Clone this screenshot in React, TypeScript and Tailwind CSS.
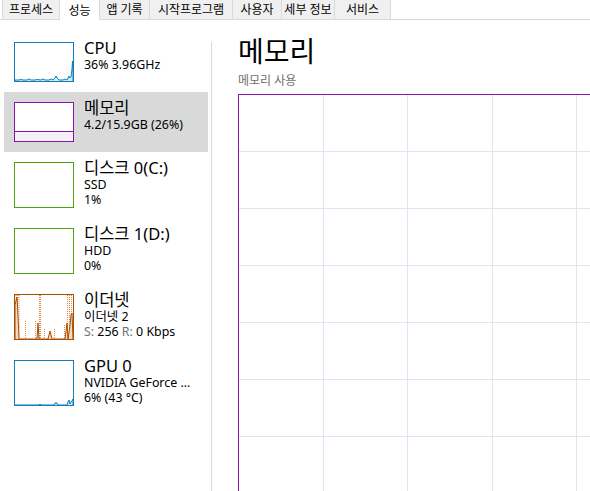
import React from "react";

const FONT = { fontFamily: '"Noto Sans", "Noto Sans CJK KR", sans-serif' };

const tabs: [string, number][] = [
  ["프로세스", 58],
  ["성능", 40],
  ["앱 기록", 50],
  ["시작프로그램", 83],
  ["사용자", 49],
  ["세부 정보", 53],
  ["서비스", 56],
];

function CpuGraph() {
  const pts =
    "0,38 0,37 4,37 6,36.5 8,37 12,37 14,36 16,37 20,37 22,36.5 26,37 28,36 30,37 34,37 36,36 38,37 40,35 41,33 42,35 44,37 48,37 50,36 52,37 53,35 54,33 55,35 56,34 57,26 57.5,18 58,30 58,38";
  return (
    <svg width="58" height="38" viewBox="0 0 58 38" className="block">
      <polygon points={pts} fill="#d6e9f5" stroke="none" />
      <polyline points={pts} fill="none" stroke="#117dbb" strokeWidth="1" />
    </svg>
  );
}

function GpuGraph() {
  const pts =
    "0,44 24,44 25,43 26,44 39,44 40,42 42,42 43,44 50,44 52,44 53,41 54,39 55,43 56,41 57,40 58,38 58,44";
  return (
    <svg width="58" height="44" viewBox="0 0 58 44" className="block">
      <polygon points={pts} fill="#d6e9f5" stroke="none" />
      <polyline points={pts} fill="none" stroke="#117dbb" strokeWidth="1" />
    </svg>
  );
}

function EthGraph() {
  const dotted: [number, number][] = [
    [1, 0],
    [2.5, 0],
    [4, 0],
    [10.5, 26],
    [20.5, 26],
    [24.5, 0],
    [25.5, 0],
    [29.5, 34],
    [39.5, 34],
    [49.5, 30],
    [52.5, 0],
    [54.5, 0],
    [56.5, 0],
  ];
  return (
    <svg width="58" height="44" viewBox="0 0 58 44" className="block">
      {dotted.map(([x, y], i) => (
        <line
          key={i}
          x1={x}
          y1={y}
          x2={x}
          y2={44}
          stroke="#e88a4c"
          strokeWidth="1"
          strokeDasharray="1 1"
        />
      ))}
      <polyline
        points="0,44 0,10 2,2 3,20 4,44 22,44 23,28 24,44 33,44 34,40 35,36 36,40 37,44 50,44 51,36 52,28 53,44 55,30 56,20 57,18 58,44"
        fill="#f6d7bf"
        stroke="#a74f01"
        strokeWidth="1"
      />
    </svg>
  );
}

function Item({
  color,
  tall,
  selected,
  graph,
  title,
  lines,
}: {
  color: string;
  tall?: boolean;
  selected?: boolean;
  graph: React.ReactNode;
  title: string;
  lines: React.ReactNode[];
}) {
  return (
    <div
      className={`flex pl-[10px] pt-[10px] ${tall ? "h-[66px]" : "h-[60px]"} ${
        selected ? "bg-[#d9d9d9]" : ""
      }`}
    >
      <div
        className={`w-[60px] ${tall ? "h-[46px]" : "h-[40px]"} border bg-white overflow-hidden shrink-0`}
        style={{ borderColor: color }}
      >
        {graph}
      </div>
      <div className="pl-[10px] -mt-[4px] text-black">
        <div className="text-[16.5px] leading-[20px] whitespace-nowrap">{title}</div>
        {lines.map((l, i) => (
          <div key={i} className="text-[12.4px] leading-[14.5px] whitespace-nowrap">
            {l}
          </div>
        ))}
      </div>
    </div>
  );
}

export default function App() {
  return (
    <div className="w-[590px] h-[491px] overflow-hidden bg-white relative" style={FONT}>
      {/* Tabs */}
      <div className="h-[20px] flex items-start border-b border-[#d9d9d9] pl-[2px]">
        {tabs.map(([t, w], i) => {
          const sel = i === 1;
          return (
            <div
              key={t}
              className={`${
                sel ? "h-[20px] bg-white" : "h-[19px] bg-[#f0f0f0]"
              } border-r border-[#d9d9d9] ${i === 0 ? "border-l" : ""} flex items-center justify-center text-[12px] leading-[19px] text-black whitespace-nowrap shrink-0`}
              style={{ width: w }}
            >
              {t}
            </div>
          );
        })}
      </div>

      <div className="flex">
        {/* Left list */}
        <div className="w-[208px] pl-[4px] pt-[12px] shrink-0">
          <Item
            color="#117dbb"
            graph={<CpuGraph />}
            title="CPU"
            lines={["36% 3.96GHz"]}
          />
          <Item
            color="#8b12ae"
            selected
            graph={
              <div className="h-full flex flex-col">
                <div className="flex-1" />
                <div className="h-[10px] border-t border-[#8b12ae] bg-[#f4f0f6]" />
              </div>
            }
            title="메모리"
            lines={["4.2/15.9GB (26%)"]}
          />
          <Item
            color="#4da60c"
            tall
            graph={null}
            title="디스크 0(C:)"
            lines={["SSD", "1%"]}
          />
          <Item
            color="#4da60c"
            tall
            graph={null}
            title="디스크 1(D:)"
            lines={["HDD", "0%"]}
          />
          <Item
            color="#a74f01"
            tall
            graph={<EthGraph />}
            title="이더넷"
            lines={[
              "이더넷 2",
              <span key="s">
                <span className="text-[#707070]">S:</span> 256{" "}
                <span className="text-[#707070]">R:</span> 0 Kbps
              </span>,
            ]}
          />
          <Item
            color="#117dbb"
            tall
            graph={<GpuGraph />}
            title="GPU 0"
            lines={["NVIDIA GeForce ...", "6% (43 °C)"]}
          />
        </div>

        {/* Separator */}
        <div className="w-px h-[460px] mt-[22px] ml-[3px] bg-[#d9d9d9] shrink-0" />

        {/* Right panel */}
        <div className="pl-[26px] pt-[13px] shrink-0">
          <div className="text-[28px] leading-[36px] text-black whitespace-nowrap">메모리</div>
          <div className="text-[12px] leading-[14px] text-[#707070] mt-[5px] whitespace-nowrap">
            메모리 사용
          </div>
          <div className="mt-[6px] w-[846px] border-l border-t border-[#8b12ae] grid grid-cols-[repeat(10,84.5px)] grid-rows-[repeat(10,57px)]">
            {Array.from({ length: 100 }).map((_, i) => (
              <div key={i} className="border-r border-b border-[#ecdff2]" />
            ))}
          </div>
        </div>
      </div>
    </div>
  );
}
